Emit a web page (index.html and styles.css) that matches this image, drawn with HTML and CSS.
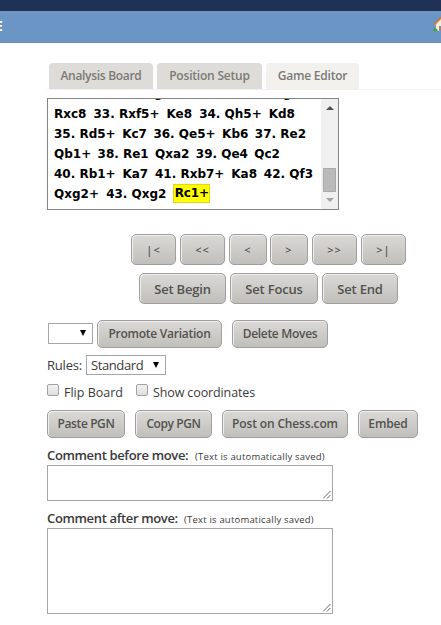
FILE: index.html
```html
<!DOCTYPE html>
<html lang="en">
<head>
<meta charset="utf-8">
<title>Game Editor</title>
<link rel="stylesheet" href="styles.css">
</head>
<body>
<div class="topbar"></div>
<header class="header">
  <span class="crumb">E</span>
  <svg class="home" width="15" height="16" viewBox="0 0 15 16">
    <path d="M3 7 8 2l6 5v7H3z" fill="#f4eee2"/>
    <path d="M1 8 8 1l7 7" fill="none" stroke="#b9743f" stroke-width="2.2"/>
    <path d="M1.500 8 8 1.800" stroke="#efb77c"/>
    <path d="M6 9h4v5H6z" fill="#8d8b87"/>
    <path d="M0 14v-2l2-1 2 1 1 2z" fill="#43a535"/>
  </svg>
</header>
<main class="main">
  <nav class="tabs">
    <a class="tab tab-analysis"><span>Analysis Board</span></a>
    <a class="tab tab-setup"><span>Position Setup</span></a>
    <a class="tab tab-editor active"><span>Game Editor</span></a>
  </nav>
  <section class="pgn">
    <div class="moves">
      <div class="line cut"><b>Kxf8</b><b>31.</b><b>Qg4</b><b>Kf8</b><b>32.</b><b>Qg6</b></div>
      <div class="line l1"><span><b>Rxc8</b></span><span>33. <b>Rxf5+</b></span><span><b>Ke8</b></span><span>34. <b>Qh5+</b></span><span><b>Kd8</b></span></div>
      <div class="line l2"><span>35. <b>Rd5+</b></span><span><b>Kc7</b></span><span>36. <b>Qe5+</b></span><span><b>Kb6</b></span><span>37. <b>Re2</b></span></div>
      <div class="line l3"><span><b>Qb1+</b></span><span>38. <b>Re1</b></span><span><b>Qxa2</b></span><span>39. <b>Qe4</b></span><span><b>Qc2</b></span></div>
      <div class="line l4"><span>40. <b>Rb1+</b></span><span><b>Ka7</b></span><span>41. <b>Rxb7+</b></span><span><b>Ka8</b></span><span>42. <b>Qf3</b></span></div>
      <div class="line l5"><span><b>Qxg2+</b></span><span>43. <b>Qxg2</b></span><span class="current">Rc1+</span></div>
    </div>
    <div class="scrollbar"><i class="up"></i><i class="thumb"></i><i class="down"></i></div>
  </section>
  <div class="row nav">
    <button class="btn w45">|&lt;</button><button class="btn w45">&lt;&lt;</button><button class="btn w38">&lt;</button><button class="btn w38">&gt;</button><button class="btn w45">&gt;&gt;</button><button class="btn w45">&gt;|</button>
  </div>
  <div class="row sets">
    <button class="btn begin">Set Begin</button><button class="btn focus">Set Focus</button><button class="btn end">Set End</button>
  </div>
  <div class="row variation">
    <div class="select empty"><i></i></div><button class="btn promote">Promote Variation</button><button class="btn delete">Delete Moves</button>
  </div>
  <div class="row rules"><span class="rules-label">Rules:</span><div class="select standard"><span>Standard</span><i></i></div></div>
  <div class="row checks">
    <i class="box"></i><span class="flip">Flip Board</span><i class="box"></i><span class="coords">Show coordinates</span>
  </div>
  <div class="row actions">
    <button class="btn paste">Paste PGN</button><button class="btn copy">Copy PGN</button><button class="btn post">Post on Chess.com</button><button class="btn embed">Embed</button>
  </div>
  <div class="label"><span class="before">Comment before move:</span><small>(Text is automatically saved)</small></div>
  <div class="area short"><svg width="8" height="8" viewBox="0 0 8 8"><path d="M0 7.5 7.5 0M4 7.5 7.5 4" stroke="#666"/></svg></div>
  <div class="label second"><span class="after">Comment after move:</span><small>(Text is automatically saved)</small></div>
  <div class="area tall"><svg width="8" height="8" viewBox="0 0 8 8"><path d="M0 7.5 7.5 0M4 7.5 7.5 4" stroke="#666"/></svg></div>
</main>
</body>
</html>
```
FILE: styles.css
```css
* { box-sizing: border-box; }
body { margin: 0; height: 625px; overflow: hidden; background: #fff; color: #3a3a3a; font-family: "Open Sans", "Noto Sans", sans-serif; font-size: 12px; }
i, b { font-style: normal; display: block; }
.topbar { height: 11px; background: #1f3154; }
.header { height: 32px; background: #6a95c4; border-bottom: 1px solid #6d8fb6; display: flex; justify-content: space-between; overflow: hidden; }
.crumb { margin: 5px 0 0 -5px; color: #fff; font-weight: 700; font-size: 14px; line-height: 20px; }
.home { margin: 6px -7px 0 0; flex: none; }
.main { padding: 20px 0 0 47px; }

.tabs { display: flex; gap: 4px; height: 27px; padding-left: 2px; border-bottom: 1px solid #f2f1ef; }
.tab { height: 26px; border-radius: 4px 4px 0 0; background: #dddcd8; color: #7b7a75; font-weight: 600; font-size: 12px; line-height: 26px; text-align: center; white-space: nowrap; }
.tab-analysis { width: 104px; letter-spacing: -.3px; }
.tab-setup { width: 105px; letter-spacing: -.2px; }
.tab-editor { width: 93px; letter-spacing: -.2px; }
.tab.active { background: #f2f1ee; height: 27px; }

.pgn { margin-top: 8px; width: 292px; height: 112px; border: 1px solid #858585; display: flex; justify-content: space-between; overflow: hidden; background: #fff; }
.moves { padding-left: 6px; margin-top: -16px; font: bold 12px/20px "DejaVu Sans", sans-serif; color: #000; }
.line { display: flex; justify-content: space-between; height: 20px; white-space: nowrap; letter-spacing: 0; }
.line b { display: inline; }
.cut { height: 21px; width: 246px; }
.l1 { width: 241px; }
.l2 { width: 252px; }
.l3 { width: 226px; }
.l4 { width: 259px; }
.l5 { width: 155px; }
.current { height: 17px; line-height: 17px; margin-top: 1px; padding: 0 0 0 1px; background: #ff0; outline: 1px solid #e3d51a; letter-spacing: -.1px; }
.scrollbar { width: 17px; background: #f0f0f0; display: flex; flex-direction: column; align-items: center; }
.up { margin-top: 7px; border: 4px solid transparent; border-top: 0; border-bottom: 4px solid #505050; }
.thumb { margin-top: 58px; width: 13px; height: 24px; background: #bababa; border: 1px solid #a9a9a9; }
.down { margin-top: 6px; border: 4px solid transparent; border-bottom: 0; border-top: 4px solid #a3a3a3; }

.row { display: flex; }
.btn { flex: none; height: 28px; padding: 0; border: 1px solid #a09f9b; border-radius: 5px; background: linear-gradient(#dad9d7, #c0bfbb); box-shadow: inset 1px 1px 0 #efeeec; color: #53524e; font: 600 12px/24px "Open Sans", sans-serif; letter-spacing: -.15px; text-align: center; white-space: nowrap; }
.nav { margin: 24px 0 0 84px; gap: 4px; }
.nav .btn, .sets .btn { height: 31px; }
.nav .btn { font-size: 11px; letter-spacing: 1px; }
.w45 { width: 45px; }
.w38 { width: 38px; }
.nav .w38 + .w38 { margin-left: -1px; }
.sets { margin: 8px 0 0 92px; gap: 4px; }
.sets .btn { font-size: 13px; letter-spacing: -.2px; }
.begin { width: 87px; }
.focus { width: 88px; }
.end { width: 76px; }
.variation { margin: 16px 0 0 1px; }
.select { height: 21px; border: 1px solid #a6a6a6; display: flex; align-items: center; justify-content: space-between; padding-right: 6px; background: #fff; }
.select i { border: 3.5px solid transparent; border-bottom: 0; border-top: 6px solid #000; }
.empty { width: 45px; margin: 3px 4px 0 0; justify-content: flex-end; }
.empty i { margin-bottom: 2px; }
.promote { width: 125px; margin-right: 10px; letter-spacing: -.25px; }
.delete { width: 96px; letter-spacing: -.3px; }
.rules { margin-top: 7px; height: 20px; align-items: center; font-size: 13px; }
.rules-label { width: 39px; letter-spacing: -.2px; }
.standard { width: 80px; height: 20px; padding-left: 4px; letter-spacing: -.4px; }
.checks { margin-top: 8px; height: 18px; font-size: 12.5px; line-height: 19px; white-space: nowrap; }
.box { flex: none; width: 12px; height: 12px; margin-top: 1px; border: 1px solid #a2a2a2; border-radius: 2px; background: linear-gradient(#f1f1f1, #dedede); }
.flip { width: 72px; margin-left: 5px; }
.coords { margin-left: 5px; letter-spacing: -.12px; }
.actions { margin-top: 9px; gap: 10px; }
.paste { width: 78px; letter-spacing: -.4px; }
.copy { width: 77px; letter-spacing: -.4px; }
.post { width: 126px; }
.embed { width: 60px; }
.label { display: flex; align-items: baseline; margin-top: 8px; height: 19px; line-height: 18px; font-size: 13px; font-weight: 600; white-space: nowrap; }
.label.second { margin-top: 8px; }
.before { width: 148px; letter-spacing: -.35px; }
.after { width: 137px; letter-spacing: -.35px; }
.label small { font-size: 9.5px; font-weight: 400; letter-spacing: .2px; }
.area { width: 286px; border: 1px solid #a6a6a6; display: flex; align-items: flex-end; justify-content: flex-end; padding: 1px; background: #fff; }
.short { height: 36px; }
.tall { height: 86px; }
```
